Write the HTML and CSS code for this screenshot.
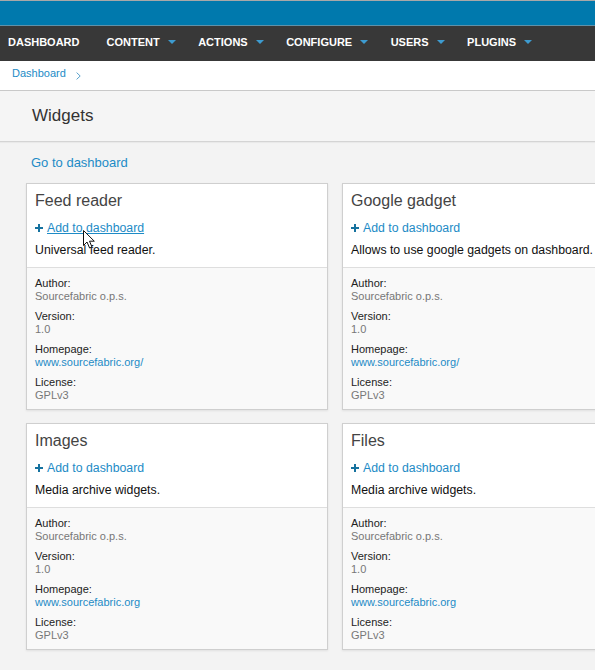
FILE: index.html
```html
<!DOCTYPE html>
<html lang="en">
<head>
<meta charset="utf-8">
<title>Widgets</title>
<link rel="stylesheet" href="styles.css">
</head>
<body>
<div class="topbar"></div>
<nav class="mainnav">
  <span class="nav-item nav-item--first">DASHBOARD</span>
  <span class="nav-item">CONTENT<svg class="caret" width="8" height="4" viewBox="0 0 8 4"><polygon points="0,0 8,0 4,4"/></svg></span>
  <span class="nav-item">ACTIONS<svg class="caret" width="8" height="4" viewBox="0 0 8 4"><polygon points="0,0 8,0 4,4"/></svg></span>
  <span class="nav-item">CONFIGURE<svg class="caret" width="8" height="4" viewBox="0 0 8 4"><polygon points="0,0 8,0 4,4"/></svg></span>
  <span class="nav-item">USERS<svg class="caret" width="8" height="4" viewBox="0 0 8 4"><polygon points="0,0 8,0 4,4"/></svg></span>
  <span class="nav-item">PLUGINS<svg class="caret" width="8" height="4" viewBox="0 0 8 4"><polygon points="0,0 8,0 4,4"/></svg></span>
</nav>
<div class="breadcrumb">
  <a class="crumb" href="#">Dashboard</a>
  <svg class="chev" width="5" height="8" viewBox="0 0 5 8"><polyline points="0.6,0.6 4.2,4 0.6,7.4"/></svg>
</div>
<header class="page-head"><h1 class="page-title">Widgets</h1></header>
<main class="content">
  <a class="back-link" href="#">Go to dashboard</a>
  <div class="widget-grid">
    <article class="widget">
      <div class="widget-main">
        <h2 class="widget-title">Feed reader</h2>
        <a class="widget-add widget-add--hover" href="#"><svg class="plus" width="8" height="8" viewBox="0 0 8 8"><rect x="0" y="3" width="8" height="2"/><rect x="3" y="0" width="2" height="8"/></svg><span class="add-text">Add to dashboard</span></a>
        <p class="widget-desc">Universal feed reader.</p>
      </div>
      <dl class="widget-meta">
        <div class="meta-group"><dt>Author:</dt><dd>Sourcefabric o.p.s.</dd></div>
        <div class="meta-group"><dt>Version:</dt><dd>1.0</dd></div>
        <div class="meta-group"><dt>Homepage:</dt><dd><a class="meta-link" href="#">www.sourcefabric.org/</a></dd></div>
        <div class="meta-group"><dt>License:</dt><dd>GPLv3</dd></div>
      </dl>
    </article>
    <article class="widget">
      <div class="widget-main">
        <h2 class="widget-title">Google gadget</h2>
        <a class="widget-add" href="#"><svg class="plus" width="8" height="8" viewBox="0 0 8 8"><rect x="0" y="3" width="8" height="2"/><rect x="3" y="0" width="2" height="8"/></svg><span class="add-text">Add to dashboard</span></a>
        <p class="widget-desc">Allows to use google gadgets on dashboard.</p>
      </div>
      <dl class="widget-meta">
        <div class="meta-group"><dt>Author:</dt><dd>Sourcefabric o.p.s.</dd></div>
        <div class="meta-group"><dt>Version:</dt><dd>1.0</dd></div>
        <div class="meta-group"><dt>Homepage:</dt><dd><a class="meta-link" href="#">www.sourcefabric.org/</a></dd></div>
        <div class="meta-group"><dt>License:</dt><dd>GPLv3</dd></div>
      </dl>
    </article>
    <article class="widget">
      <div class="widget-main">
        <h2 class="widget-title">Images</h2>
        <a class="widget-add" href="#"><svg class="plus" width="8" height="8" viewBox="0 0 8 8"><rect x="0" y="3" width="8" height="2"/><rect x="3" y="0" width="2" height="8"/></svg><span class="add-text">Add to dashboard</span></a>
        <p class="widget-desc">Media archive widgets.</p>
      </div>
      <dl class="widget-meta">
        <div class="meta-group"><dt>Author:</dt><dd>Sourcefabric o.p.s.</dd></div>
        <div class="meta-group"><dt>Version:</dt><dd>1.0</dd></div>
        <div class="meta-group"><dt>Homepage:</dt><dd><a class="meta-link" href="#">www.sourcefabric.org</a></dd></div>
        <div class="meta-group"><dt>License:</dt><dd>GPLv3</dd></div>
      </dl>
    </article>
    <article class="widget">
      <div class="widget-main">
        <h2 class="widget-title">Files</h2>
        <a class="widget-add" href="#"><svg class="plus" width="8" height="8" viewBox="0 0 8 8"><rect x="0" y="3" width="8" height="2"/><rect x="3" y="0" width="2" height="8"/></svg><span class="add-text">Add to dashboard</span></a>
        <p class="widget-desc">Media archive widgets.</p>
      </div>
      <dl class="widget-meta">
        <div class="meta-group"><dt>Author:</dt><dd>Sourcefabric o.p.s.</dd></div>
        <div class="meta-group"><dt>Version:</dt><dd>1.0</dd></div>
        <div class="meta-group"><dt>Homepage:</dt><dd><a class="meta-link" href="#">www.sourcefabric.org</a></dd></div>
        <div class="meta-group"><dt>License:</dt><dd>GPLv3</dd></div>
      </dl>
    </article>
  </div>
</main>
<svg class="cursor" width="13" height="20" viewBox="0 0 13 20"><path d="M0.5 0.5 L0.5 15.5 L4 12 L6.6 18 L9 17 L6.5 11.2 L11.3 11.2 Z"/></svg>
</body>
</html>
```
FILE: styles.css
```css
html, body {
  overflow-x: hidden;
}
body {
  margin: 0;
  background: #f3f3f3;
  font-family: "Liberation Sans", Arial, sans-serif;
  color: #222;
  position: relative;
}
a {
  color: #1d8bc6;
  text-decoration: none;
}

.topbar {
  height: 24px;
  background: #0079ad;
  border-top: 1px solid #a8a8a8;
  border-bottom: 1px solid #5f91a9;
}

.mainnav {
  display: flex;
  height: 35px;
  box-sizing: border-box;
  background: #383838;
  padding: 10px 0 0 8px;
  color: #fff;
  font-size: 11px;
  font-weight: bold;
  line-height: 13px;
}
.nav-item {
  display: flex;
  align-items: flex-start;
  height: 13px;
  margin-right: 22.5px;
  white-space: nowrap;
}
.nav-item--first {
  margin-right: 27px;
}
.caret {
  margin: 4px 0 0 8px;
  fill: #3d9bd0;
}

.breadcrumb {
  display: flex;
  align-items: flex-start;
  height: 30px;
  box-sizing: border-box;
  padding: 6px 12px 0;
  background: #fff;
  border-bottom: 1px solid #c9c9c9;
  font-size: 11px;
  line-height: 13px;
}
.chev {
  margin: 5px 0 0 10px;
  fill: none;
  stroke: #5aa2cc;
  stroke-width: 1;
}

.page-head {
  height: 51px;
  box-sizing: border-box;
  padding: 15px 32px;
  background: #f5f5f5;
  border-bottom: 1px solid #d4d4d4;
  box-shadow: 0 1px 1px rgba(0, 0, 0, 0.04);
}
.page-title {
  margin: 0;
  font-size: 17px;
  line-height: 20px;
  font-weight: normal;
  color: #333;
}

.content {
  padding: 13px 0 40px 26px;
}
.back-link {
  display: block;
  width: max-content;
  margin: 0 0 12px 5px;
  font-size: 13px;
  line-height: 16px;
}

.widget-grid {
  display: grid;
  grid-template-columns: repeat(2, 302px);
  column-gap: 14px;
  row-gap: 13px;
  width: max-content;
}
.widget {
  background: #fff;
  border: 1px solid #cfcfcf;
  box-shadow: 0 1px 2px rgba(0, 0, 0, 0.08);
}
.widget-main {
  padding: 7px 8px 9px;
}
.widget-title {
  margin: 0 0 9px;
  font-size: 16px;
  line-height: 20px;
  font-weight: normal;
  color: #444;
}
.widget-add {
  display: flex;
  align-items: center;
  font-size: 12.3px;
  line-height: 16px;
}
.plus {
  fill: #16729f;
  margin-right: 4px;
}
.widget-add--hover .add-text {
  text-decoration: underline;
}
.widget-desc {
  margin: 6px 0 0;
  font-size: 12.3px;
  line-height: 16px;
  color: #111;
}

.widget-meta {
  margin: 0;
  padding: 9px 8px 7px;
  background: #f9f9f9;
  border-top: 1px solid #dedede;
  font-size: 11px;
  line-height: 13px;
}
.meta-group {
  margin-bottom: 7px;
}
.meta-group:last-child {
  margin-bottom: 0;
}
.meta-group dt {
  color: #222;
}
.meta-group dd {
  margin: 0;
  color: #777;
}

.cursor {
  position: absolute;
  left: 83px;
  top: 230px;
  fill: #fff;
  stroke: #111;
  stroke-width: 1;
  stroke-linejoin: round;
}
```
